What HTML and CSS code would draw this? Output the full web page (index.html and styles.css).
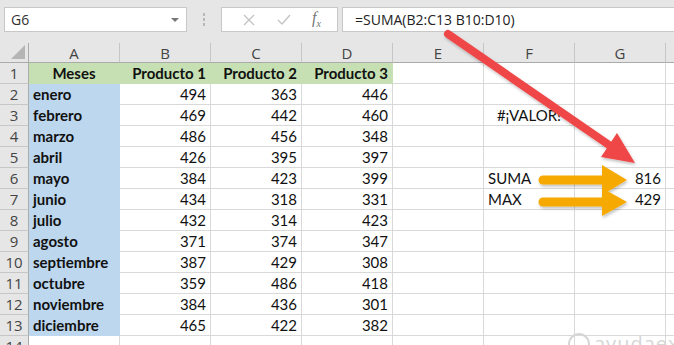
FILE: index.html
```html
<!DOCTYPE html>
<html lang="es">
<head>
<meta charset="utf-8">
<link rel="stylesheet" href="styles.css">
</head>
<body>
<div class="app">
  <div class="fbar">
    <div class="namebox"><span>G6</span><span class="dd"></span></div>
    <div class="vdots"><i></i><i></i><i></i></div>
    <div class="btns">
      <svg class="ic" width="14" height="14" viewBox="0 0 14 14"><path d="M2 2 L12 12 M12 2 L2 12" stroke="#c4c4c4" stroke-width="1.4" fill="none"/></svg>
      <svg class="ic" width="16" height="14" viewBox="0 0 16 14"><path d="M2 7 L6 11 L14 2" stroke="#c4c4c4" stroke-width="1.4" fill="none"/></svg>
      <span class="fx"><i>f</i><sub>x</sub></span>
    </div>
    <div class="formula">=SUMA(B2:C13 B10:D10)</div>
  </div>
  <div class="sheet">
    <div class="c corner"><span class="tri"></span></div>
    <div class="c ch">A</div><div class="c ch">B</div><div class="c ch">C</div><div class="c ch">D</div><div class="c ch">E</div><div class="c ch">F</div><div class="c ch">G</div><div class="c ch rest"></div>

    <div class="c rh">1</div><div class="c g b ctr">Meses</div><div class="c g b r">Producto 1</div><div class="c g b r">Producto 2</div><div class="c g b r">Producto 3</div><div class="c"></div><div class="c"></div><div class="c"></div><div class="c rest"></div>
    <div class="c rh">2</div><div class="c bl b">enero</div><div class="c r">494</div><div class="c r">363</div><div class="c r">446</div><div class="c"></div><div class="c"></div><div class="c"></div><div class="c rest"></div>
    <div class="c rh">3</div><div class="c bl b">febrero</div><div class="c r">469</div><div class="c r">442</div><div class="c r">460</div><div class="c"></div><div class="c ctr">#¡VALOR!</div><div class="c"></div><div class="c rest"></div>
    <div class="c rh">4</div><div class="c bl b">marzo</div><div class="c r">486</div><div class="c r">456</div><div class="c r">348</div><div class="c"></div><div class="c"></div><div class="c"></div><div class="c rest"></div>
    <div class="c rh">5</div><div class="c bl b">abril</div><div class="c r">426</div><div class="c r">395</div><div class="c r">397</div><div class="c"></div><div class="c"></div><div class="c"></div><div class="c rest"></div>
    <div class="c rh">6</div><div class="c bl b">mayo</div><div class="c r">384</div><div class="c r">423</div><div class="c r">399</div><div class="c"></div><div class="c">SUMA</div><div class="c r">816</div><div class="c rest"></div>
    <div class="c rh">7</div><div class="c bl b">junio</div><div class="c r">434</div><div class="c r">318</div><div class="c r">331</div><div class="c"></div><div class="c">MAX</div><div class="c r">429</div><div class="c rest"></div>
    <div class="c rh">8</div><div class="c bl b">julio</div><div class="c r">432</div><div class="c r">314</div><div class="c r">423</div><div class="c"></div><div class="c"></div><div class="c"></div><div class="c rest"></div>
    <div class="c rh">9</div><div class="c bl b">agosto</div><div class="c r">371</div><div class="c r">374</div><div class="c r">347</div><div class="c"></div><div class="c"></div><div class="c"></div><div class="c rest"></div>
    <div class="c rh">10</div><div class="c bl b">septiembre</div><div class="c r">387</div><div class="c r">429</div><div class="c r">308</div><div class="c"></div><div class="c"></div><div class="c"></div><div class="c rest"></div>
    <div class="c rh">11</div><div class="c bl b">octubre</div><div class="c r">359</div><div class="c r">486</div><div class="c r">418</div><div class="c"></div><div class="c"></div><div class="c"></div><div class="c rest"></div>
    <div class="c rh">12</div><div class="c bl b">noviembre</div><div class="c r">384</div><div class="c r">436</div><div class="c r">301</div><div class="c"></div><div class="c"></div><div class="c"></div><div class="c rest"></div>
    <div class="c rh">13</div><div class="c bl b">diciembre</div><div class="c r">465</div><div class="c r">422</div><div class="c r">382</div><div class="c"></div><div class="c"></div><div class="c"></div><div class="c rest"></div>
    <div class="c rh">14</div><div class="c"></div><div class="c"></div><div class="c"></div><div class="c"></div><div class="c"></div><div class="c"></div><div class="c"></div><div class="c rest"></div>
  </div>
  <svg class="arrows" width="674" height="345" viewBox="0 0 674 345">
    <defs>
      <filter id="sh" x="-20%" y="-20%" width="140%" height="140%">
        <feDropShadow dx="1" dy="2" stdDeviation="1.5" flood-color="#000" flood-opacity="0.25"/>
      </filter>
    </defs>
    <g filter="url(#sh)">
      <line x1="448" y1="34" x2="612" y2="147" stroke="#ef4646" stroke-width="8" stroke-linecap="round"/>
      <polygon points="601,157 617,133 635,163" fill="#ef4646"/>
    </g>
    <g filter="url(#sh)">
      <line x1="543" y1="180" x2="606" y2="180" stroke="#f6a900" stroke-width="9" stroke-linecap="round"/>
      <polygon points="602,165 627,180 602,195" fill="#f6a900"/>
      <line x1="543" y1="202" x2="606" y2="202" stroke="#f6a900" stroke-width="9" stroke-linecap="round"/>
      <polygon points="602,188 627,202 602,216" fill="#f6a900"/>
    </g>
  </svg>
  <div class="wm"><span class="wmc"></span>ayudaexcel</div>
</div>
</body>
</html>
```
FILE: styles.css
```css
html, body { margin: 0; padding: 0; }
body { width: 674px; height: 345px; overflow: hidden; background: #fff; font-family: Lato, "Open Sans", sans-serif; }
.app { position: relative; width: 674px; height: 345px; overflow: hidden; }

.fbar { height: 43px; background: #e6e6e6; display: flex; align-items: flex-start; padding: 7px 0 0 4px; box-sizing: border-box; }
.namebox { width: 183px; height: 25px; box-sizing: border-box; background: #fff; border: 1px solid #c8c8c8; display: flex; align-items: center; justify-content: space-between; padding: 0 7px 0 6px; font-family: "Open Sans", sans-serif; font-size: 14px; color: #333; }
.dd { width: 0; height: 0; border-left: 4px solid transparent; border-right: 4px solid transparent; border-top: 4px solid #777; }
.vdots { width: 34px; height: 25px; display: flex; flex-direction: column; align-items: center; justify-content: center; gap: 2px; }
.vdots i { display: block; width: 2px; height: 3px; background: #b8b8b8; }
.btns { width: 117px; height: 25px; box-sizing: border-box; background: #fff; border: 1px solid #c8c8c8; display: flex; align-items: center; justify-content: space-around; padding: 0 6px 0 10px; }
.fx { font-family: "Liberation Serif", serif; font-size: 16px; color: #777; }
.fx sub { font-size: 10px; font-style: italic; }
.formula { flex: 1; margin-left: 4px; height: 25px; box-sizing: border-box; background: #fff; border: 1px solid #c8c8c8; border-right: none; display: flex; align-items: center; padding-left: 12px; font-family: "Open Sans", sans-serif; font-size: 14px; color: #222; }

.sheet { display: grid; grid-template-columns: 29px repeat(7, 91px) 1fr; grid-template-rows: 20px repeat(14, 21px); }
.c { box-sizing: border-box; border-right: 1px solid #d9d9d9; border-bottom: 1px solid #d9d9d9; font-size: 15px; color: #111; display: flex; align-items: center; padding: 0 4px; white-space: nowrap; overflow: hidden; }
.ch, .rh, .corner { background: #e6e6e6; border-color: #c6c6c6; color: #444; font-family: "Open Sans", sans-serif; font-size: 15px; justify-content: center; }
.ch { border-bottom-color: #ababab; }
.rh { border-right-color: #ababab; padding: 0; }
.ch.rest { border-right: none; }
.corner { position: relative; border-right-color: #ababab; border-bottom-color: #ababab; }
.tri { position: absolute; right: 3px; bottom: 3px; width: 0; height: 0; border-left: 14px solid transparent; border-bottom: 14px solid #b5b5b5; }
.rest { border-right: none; }
.g { background: #c6e0b4; border-color: #c6e0b4; }
.bl { background: #bdd7ee; border-color: #bdd7ee; }
.b { font-weight: 700; }
.r { justify-content: flex-end; }
.ctr { justify-content: center; }

.arrows { position: absolute; left: 0; top: 0; pointer-events: none; }
.wm { position: absolute; left: 568px; top: 330px; font-family: "Open Sans", sans-serif; font-size: 20px; color: #d6d6d6; letter-spacing: 1px; display: flex; align-items: center; gap: 4px; }
.wmc { width: 18px; height: 18px; border: 2px solid #d6d6d6; border-radius: 50%; }
```
